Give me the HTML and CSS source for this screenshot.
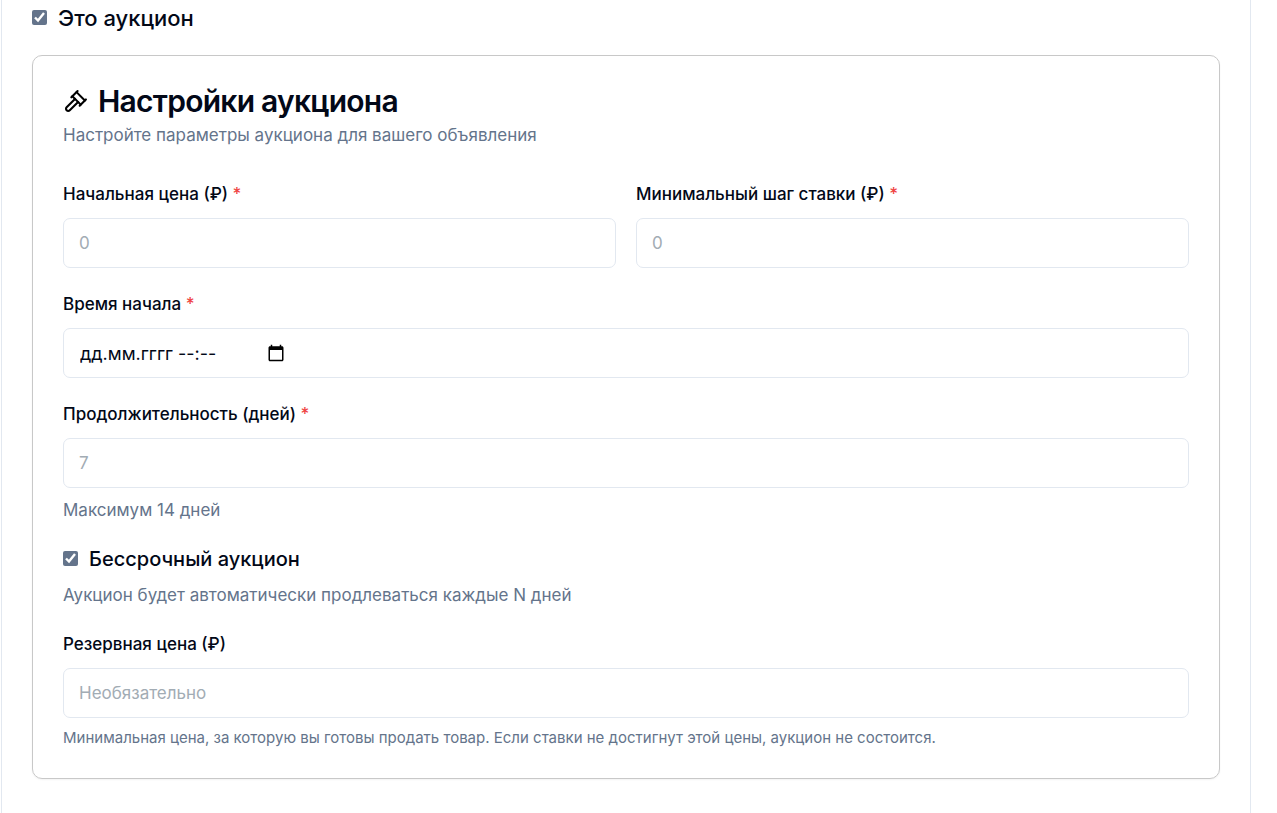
FILE: index.html
```html
<!DOCTYPE html>
<html lang="ru">
<head>
<meta charset="utf-8">
<meta name="viewport" content="width=device-width, initial-scale=1">
<title>Настройки аукциона</title>
<link rel="stylesheet" href="styles.css">
</head>
<body>
<main class="panel">
  <form class="form">
    <label class="check check-lg"><input type="checkbox" class="checkbox" checked><span>Это аукцион</span></label>
    <section class="card">
      <header class="card-header">
        <h2 class="title">
          <svg class="title-icon" viewBox="0 0 24 24" fill="none" stroke="currentColor" stroke-width="2" stroke-linecap="round" stroke-linejoin="round" aria-hidden="true">
            <path d="m14.500 12.500-8 8a2.119 2.119 0 1 1-3-3l8-8"/>
            <path d="m16 16 6-6"/>
            <path d="m8 8 6-6"/>
            <path d="m9 7 8 8"/>
            <path d="m21 11-8-8"/>
          </svg>
          <span>Настройки аукциона</span>
        </h2>
        <p class="hint">Настройте параметры аукциона для вашего объявления</p>
      </header>
      <div class="fields">
        <div class="row">
          <div class="field">
            <label class="label" for="start-price">Начальная цена (₽) <span class="required">*</span></label>
            <input class="input" id="start-price" type="number" placeholder="0">
          </div>
          <div class="field">
            <label class="label" for="step">Минимальный шаг ставки (₽) <span class="required">*</span></label>
            <input class="input" id="step" type="number" placeholder="0">
          </div>
        </div>
        <div class="field">
          <label class="label" for="start-time">Время начала <span class="required">*</span></label>
          <div class="input datetime">
            <input class="datetime-text" id="start-time" type="text" placeholder="дд.мм.гггг --:--">
            <button class="picker" type="button" aria-label="Открыть календарь">
              <svg class="picker-icon" viewBox="0 0 24 24" fill="currentColor" aria-hidden="true"><path d="M20 3h-1V1h-2v2H7V1H5v2H4c-1.100 0-2 .9-2 2v16c0 1.100.9 2 2 2h16c1.100 0 2-.9 2-2V5c0-1.100-.9-2-2-2zm0 18H4V8h16v13z"/></svg>
            </button>
          </div>
        </div>
        <div class="field">
          <label class="label" for="duration">Продолжительность (дней) <span class="required">*</span></label>
          <input class="input" id="duration" type="number" placeholder="7">
          <p class="hint">Максимум 14 дней</p>
        </div>
        <div class="field">
          <label class="check"><input type="checkbox" class="checkbox" checked><span>Бессрочный аукцион</span></label>
          <p class="hint">Аукцион будет автоматически продлеваться каждые N дней</p>
        </div>
        <div class="field">
          <label class="label" for="reserve">Резервная цена (₽)</label>
          <input class="input" id="reserve" type="number" placeholder="Необязательно">
          <p class="note">Минимальная цена, за которую вы готовы продать товар. Если ставки не достигнут этой цены, аукцион не состоится.</p>
        </div>
      </div>
    </section>
  </form>
</main>
</body>
</html>
```
FILE: styles.css
```css
* { box-sizing: border-box; }

body {
  margin: 0;
  padding: 0 26px 0 1px;
  background: #fff;
  color: #020817;
  font-family: Inter, "Liberation Sans", sans-serif;
}

h2, p { margin: 0; }

.panel {
  min-height: 100vh;
  padding: 3px 30px 30px;
  border: solid #e2e8f0;
  border-width: 0 1px;
}

.form {
  display: flex;
  flex-direction: column;
  gap: 22px;
}

.card {
  padding: 30px;
  border: 1px solid #c8c8c8;
  border-radius: 10px;
  box-shadow: 0 1px 2px rgba(0, 0, 0, 0.05);
}

.card-header {
  display: flex;
  flex-direction: column;
  gap: 7px;
  margin-bottom: 32px;
}

.title {
  display: flex;
  align-items: center;
  gap: 10px;
  font-size: 30px;
  font-weight: 600;
  line-height: 30px;
  letter-spacing: -0.025em;
}

.title-icon {
  width: 25px;
  height: 25px;
  color: #000;
}

.hint {
  color: #64748b;
  font-size: 17px;
  line-height: 25px;
}

.note {
  color: #64748b;
  font-size: 15px;
  line-height: 20px;
}

.fields {
  display: flex;
  flex-direction: column;
  gap: 22px;
}

.row {
  display: grid;
  grid-template-columns: 1fr 1fr;
  gap: 20px;
}

.field {
  display: flex;
  flex-direction: column;
  gap: 10px;
}

.label {
  font-size: 17px;
  font-weight: 500;
  line-height: 28px;
}

.required { color: #ef4444; }

.input {
  width: 100%;
  height: 50px;
  padding: 0 15px;
  border: 1px solid #e2e8f0;
  border-radius: 7px;
  background: #fff;
  color: inherit;
  font: 400 17px/25px Inter, "Liberation Sans", sans-serif;
  appearance: textfield;
}

.input::placeholder { color: #a2acb4; opacity: 1; }

.datetime {
  display: flex;
  align-items: center;
  font-size: 18px;
}

.datetime-text {
  width: 187px;
  padding: 0 1px;
  border: 0;
  background: none;
  color: inherit;
  font: inherit;
}

.datetime-text::placeholder { color: #020817; opacity: 1; }

.picker {
  display: flex;
  padding: 0;
  border: 0;
  background: none;
  color: #000;
}

.picker-icon { width: 20px; height: 18px; }

.check {
  display: flex;
  align-items: center;
  gap: 11px;
  font-size: 20px;
  font-weight: 500;
  line-height: 28px;
}

.check-lg { font-size: 22px; line-height: 30px; }

.checkbox {
  width: 15px;
  height: 15px;
  margin: 0 0 2px;
  accent-color: #64748b;
}
```
